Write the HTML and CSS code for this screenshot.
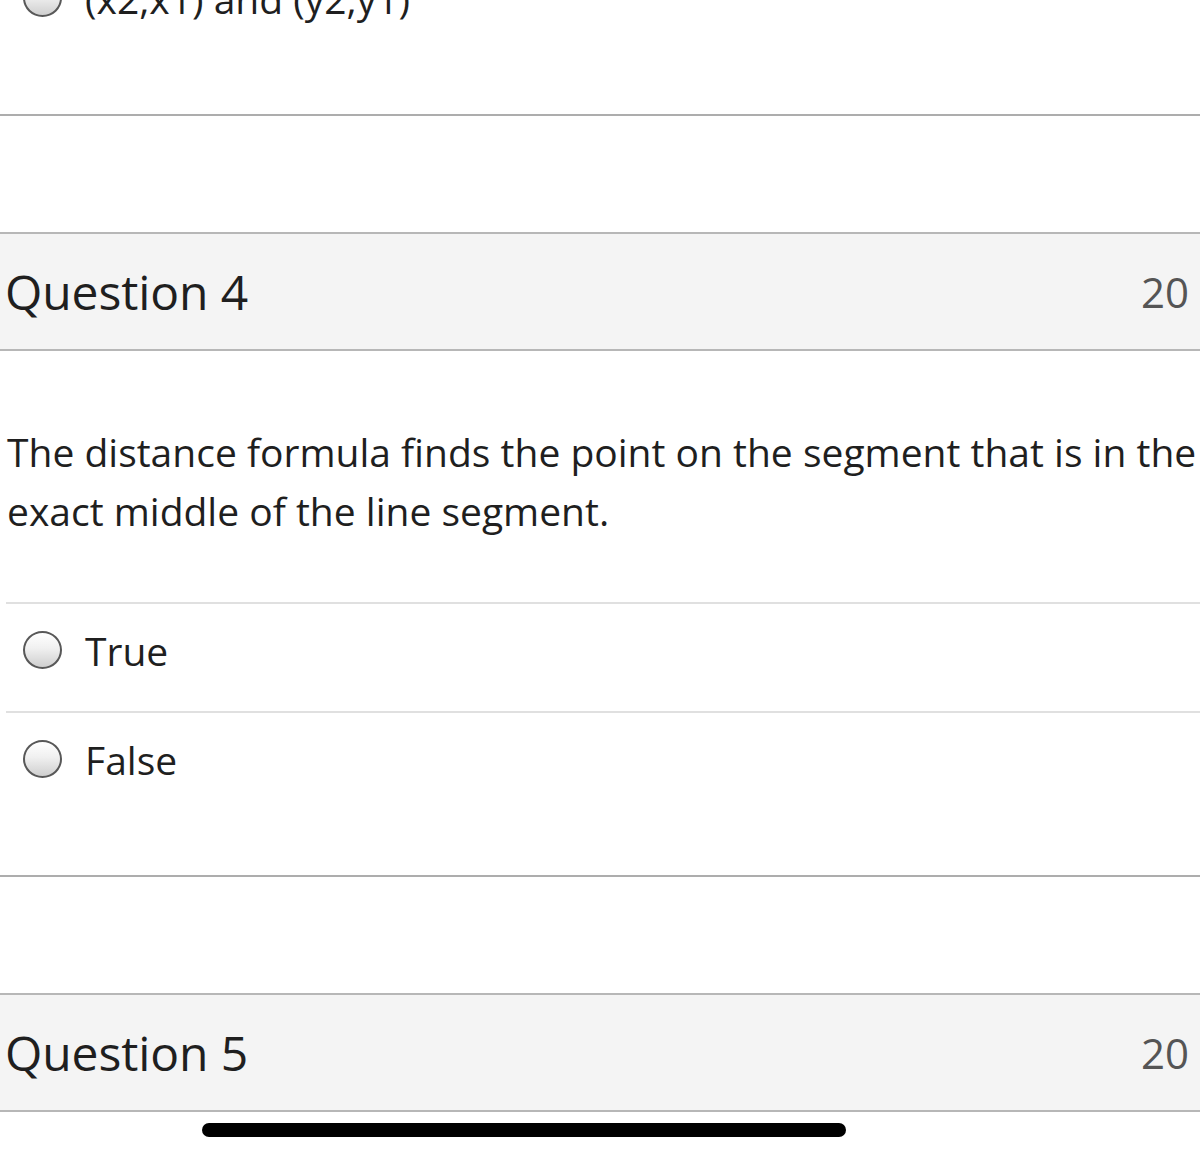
FILE: index.html
```html
<!DOCTYPE html>
<html lang="en">
<head>
<meta charset="utf-8">
<title>Quiz</title>
<link rel="stylesheet" href="styles.css">
</head>
<body>
<div class="page">
  <section class="question question--tail">
    <ul class="options">
      <li class="option"><span class="radio"></span><span class="label">(x2,x1) and (y2,y1)</span></li>
    </ul>
  </section>

  <section class="question">
    <header class="q-head">
      <h2 class="q-title">Question 4</h2>
      <span class="q-points">20</span>
    </header>
    <p class="prompt">The distance formula finds the point on the segment that is in the exact middle of the line segment.</p>
    <ul class="options">
      <li class="option"><span class="radio"></span><span class="label">True</span></li>
      <li class="option"><span class="radio"></span><span class="label">False</span></li>
    </ul>
  </section>

  <section class="question">
    <header class="q-head">
      <h2 class="q-title">Question 5</h2>
      <span class="q-points">20</span>
    </header>
  </section>

  <div class="home-indicator"></div>
</div>
</body>
</html>
```

FILE: styles.css
```css
* { box-sizing: border-box; }

html, body {
  margin: 0;
  padding: 0;
  background: #ffffff;
}

body {
  font-family: "Open Sans", "Noto Sans", sans-serif;
  color: #1f1f1f;
}

.page {
  width: 1200px;
  height: 1160px;
  overflow: hidden;
  position: relative;
}

.question {
  margin-bottom: 116px;
}

.question--tail {
  margin-top: -50px;
}

.q-head {
  display: flex;
  align-items: center;
  justify-content: space-between;
  height: 119px;
  background: #f4f4f4;
  border-top: 2px solid #b7b7b7;
  border-bottom: 2px solid #b7b7b7;
  padding: 0 11px 0 5px;
}

.q-title {
  margin: 0;
  font-size: 48px;
  font-weight: 400;
  line-height: 1;
  letter-spacing: -0.1px;
  color: #1f1f1f;
}

.q-points {
  font-size: 42px;
  line-height: 1;
  color: #555555;
}

.prompt {
  margin: 71px 0 0 0;
  padding-left: 7px;
  width: 1216px;
  font-size: 39px;
  line-height: 59px;
  color: #1f1f1f;
}

.options {
  list-style: none;
  margin: 62px 0 0 0;
  padding: 0 0 55px 6px;
  border-bottom: 2px solid #adadad;
}

.question--tail .options {
  margin-top: 0;
}

.option {
  display: flex;
  align-items: center;
  height: 109px;
  border-top: 2px solid #e0e0e0;
  padding: 0 0 15px 17px;
}

.radio {
  flex: none;
  width: 39px;
  height: 38px;
  border-radius: 50%;
  border: 2px solid #585858;
  background: linear-gradient(180deg, #ffffff 0%, #f0f0f0 45%, #cfcfcf 100%);
}

.label {
  margin-left: 23px;
  font-size: 39px;
  line-height: 1;
  color: #1f1f1f;
}

.home-indicator {
  position: absolute;
  left: 202px;
  top: 1123px;
  width: 644px;
  height: 14px;
  border-radius: 7px;
  background: #000000;
}
```
